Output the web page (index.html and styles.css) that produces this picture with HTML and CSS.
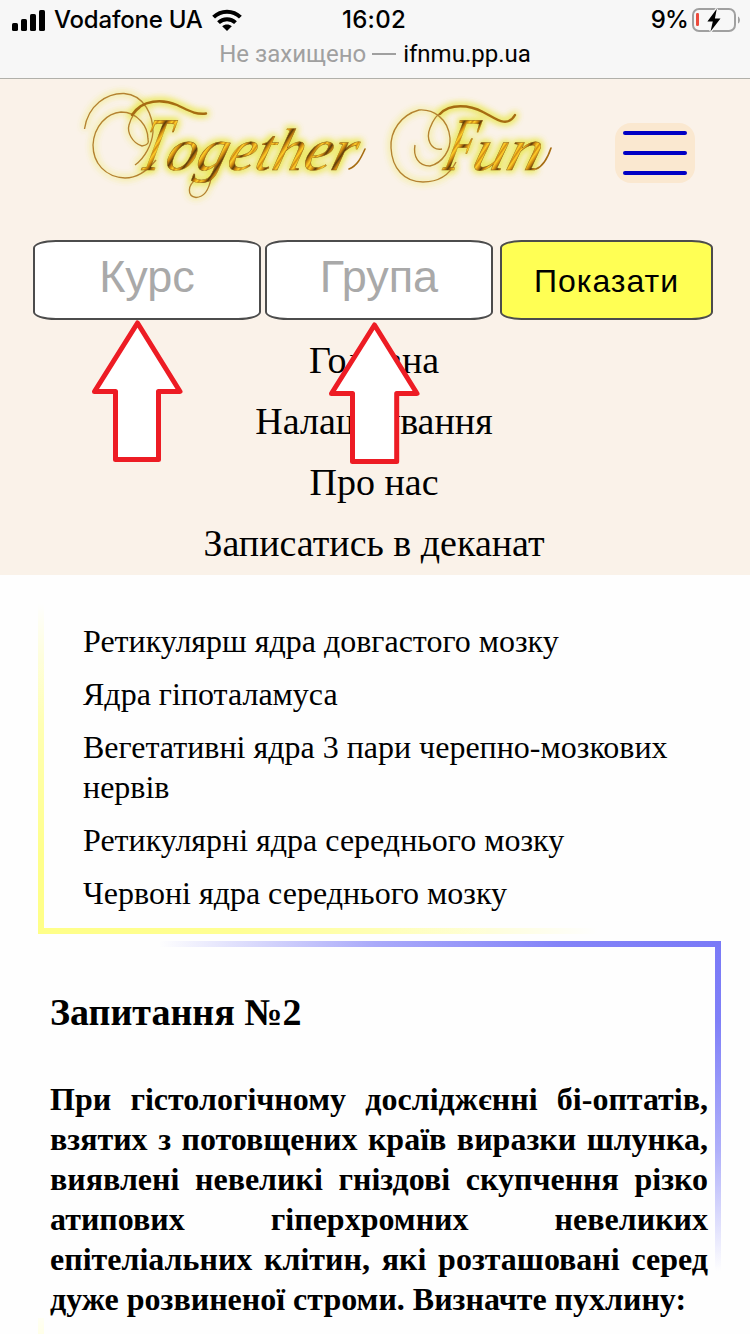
FILE: index.html
```html
<!DOCTYPE html>
<html lang="uk">
<head>
<meta charset="utf-8">
<title>Together Fun</title>
<link rel="stylesheet" href="styles.css">
</head>
<body>
<div class="browser-bar">
  <div class="status">
    <div class="carrier">
      <svg width="34" height="22" viewBox="0 0 34 22"><rect x="0" y="14" width="6" height="8" rx="1.6"/><rect x="9" y="10" width="6" height="12" rx="1.6"/><rect x="18" y="5" width="6" height="17" rx="1.6"/><rect x="27" y="1" width="6" height="21" rx="1.6"/></svg>
      <span class="carrier-name">Vodafone UA</span>
      <svg class="wifi" width="30" height="22" viewBox="0 0 30 22" fill="none" stroke="#000" stroke-width="4"><path d="M1.600 8.100C9 .8 21 .8 28.400 8.100"/><path d="M6.500 13.600c4.800-4.500 12.200-4.500 17 0"/><path d="M15 22l-4.800-4.700c2.700-2.400 6.900-2.400 9.600 0z" fill="#000" stroke="none"/></svg>
    </div>
    <span class="clock">16:02</span>
    <div class="battery">
      <span class="percent">9%</span>
      <svg width="49" height="24" viewBox="0 0 49 24"><rect x="1" y="1" width="42" height="22" rx="6" fill="none" stroke="#a0a0a0" stroke-width="2"/><path d="M46 8.500c2.600 1 2.600 6 0 7z" fill="#a0a0a0"/><rect x="4" y="5" width="3" height="13" rx="1.2" fill="#eb4b3d"/><path d="M24.800 .8L15.400 13.600h5.400l-2.300 9.800 10-12.800h-5.600z" fill="#000" stroke="#f7f7f7" stroke-width="2.6" paint-order="stroke"/></svg>
    </div>
  </div>
  <div class="address"><span class="insecure">Не захищено <b class="dash"></b></span> <span class="host">ifnmu.pp.ua</span></div>
</div>
<header class="header">
  <div class="brand-row">
    <svg class="logo" width="490" height="130" viewBox="72 82 490 130">
      <defs>
        <linearGradient id="gold" x1="0" y1="0" x2="7" y2="3" gradientUnits="userSpaceOnUse" spreadMethod="reflect">
          <stop offset="0" stop-color="#5c3a0a"/><stop offset=".35" stop-color="#c9820f"/><stop offset=".75" stop-color="#ffcf2a"/><stop offset="1" stop-color="#d08a12"/>
        </linearGradient>
        <filter id="glow" x="-10%" y="-20%" width="120%" height="140%">
          <feMorphology in="SourceAlpha" operator="dilate" radius="1.2" result="wide"/>
          <feGaussianBlur in="wide" stdDeviation="3.800" result="soft"/>
          <feFlood flood-color="#ebe85a"/>
          <feComposite in2="soft" operator="in" result="halo"/>
          <feMerge><feMergeNode in="halo"/><feMergeNode in="halo"/></feMerge>
        </filter>
        <filter id="faint" x="-10%" y="-20%" width="120%" height="140%">
          <feGaussianBlur in="SourceAlpha" stdDeviation="3.500" result="soft"/>
          <feFlood flood-color="#ebe85a"/>
          <feComposite in2="soft" operator="in" result="halo"/>
          <feMerge><feMergeNode in="halo"/><feMergeNode in="halo"/><feMergeNode in="SourceGraphic"/></feMerge>
        </filter>
        <g id="lettering">
          <g class="wordmark" transform="translate(0 169.500) skewX(-15)">
            <text class="capital" x="137" textLength="25" lengthAdjust="spacingAndGlyphs">T</text>
            <text x="163" textLength="190" lengthAdjust="spacingAndGlyphs">ogether</text>
            <text class="capital" x="442" textLength="27" lengthAdjust="spacingAndGlyphs">F</text>
            <text x="470" textLength="68" lengthAdjust="spacingAndGlyphs">un</text>
          </g>
          <g class="swash">
            <path d="M132 115C142 99 163 99 177 105C188 110 195 115 206 113.500"/>
            <path d="M440 114C450 103 470 105 483 112C495 118 507 129 515 115"/>
          </g>
        </g>
      </defs>
      <use href="#lettering" filter="url(#glow)"/>
      <g class="flourish" filter="url(#faint)">
        <path d="M84.500 129C88 105 107 93 124 93.500C145 95 153 116 153 132C152 144 145 158 135 165"/>
        <path d="M156 160C144 175 134 178 125 178C105 177 93 163 93 145C94 126 107 113 121 112C138 112 148 127 148 139C149 143 148 145 142 146C132 143 127 132 129 125C131 118 134 112 140 108"/>
        <path d="M415 145C413 156 418 166 430 166C443 163 451 149 450 138C448 118 433 109 419 110C401 115 390 131 391 148C392 168 404 182 423 182C438 182 449 176 456 162"/>
        <path d="M442 149C430 151 426 138 430 128C434 118 437 115 442 112"/>
        <path d="M211 178C209 190 204 197 196 197.500C187 196 187 185 197 179"/>
      </g>
      <use href="#lettering"/>
      <path class="tail" d="M349 169C357 166 361 158 365 149M536 169C544 166 548 157 551 148"/>
    </svg>
    <div class="burger"><i></i><i></i><i></i></div>
  </div>
  <div class="filters">
    <div class="field">Курс</div>
    <div class="field">Група</div>
    <div class="field submit">Показати</div>
  </div>
  <nav class="menu">
    <a>Головна</a>
    <a>Налаштування</a>
    <a>Про нас</a>
    <a>Записатись в деканат</a>
  </nav>
  <svg class="pointers" width="330" height="146" viewBox="91 320 330 146"><path d="M137.500 323L180 391.500H158.500V459.500H115.500V391.500H94.500Z"/><path d="M374.500 325L417 393.500H396.700V461.500H352.500V393.500H331.500Z"/></svg>
</header>
<main>
  <section class="card card-yellow">
    <p>Ретикулярш ядра довгастого мозку</p>
    <p>Ядра гіпоталамуса</p>
    <p>Вегетативні ядра 3 пари черепно-мозкових нервів</p>
    <p>Ретикулярні ядра середнього мозку</p>
    <p>Червоні ядра середнього мозку</p>
  </section>
  <section class="card-blue">
    <h2>Запитання №2</h2>
    <p class="question">При гістологічному досліджєнні бі-оптатів, взятих з потовщених країв виразки шлунка, виявлені невеликі гніздові скупчення різко атипових гіперхромних невеликих епітеліальних клітин, які розташовані серед дуже розвиненої строми. Визначте пухлину:</p>
  </section>
</main>
</body>
</html>
```
FILE: styles.css
```css
* { box-sizing: border-box; }
body { margin: 0; width: 750px; height: 1334px; overflow: hidden; background: #fefefe; color: #000; font-family: "Liberation Serif", serif; }
.browser-bar { height: 79px; background: #f7f7f7; border-bottom: 1px solid #b1b0aa; font-family: Inter, "Liberation Sans", sans-serif; }
.status { display: grid; grid-template-columns: 1fr auto 1fr; height: 40px; padding: 0 9px 0 12px; align-items: center; font-size: 24px; font-weight: 500; line-height: 40px; }
.carrier, .battery { display: flex; align-items: center; }
.carrier-name { margin-left: 8px; letter-spacing: -.2px; }
.clock { margin-right: 5px; letter-spacing: .3px; }
.wifi { margin-left: 9px; }
.battery { justify-content: flex-end; gap: 4px; }
.percent { letter-spacing: -.8px; }
.address { text-align: center; font-size: 24px; line-height: 28px; font-family: Roboto, sans-serif; }
.insecure { color: #a0a0a0; }
.dash { display: inline-block; width: 24px; height: 2px; margin: 0 1px 7px 0; background: #a0a0a0; }
.header { position: relative; height: 496px; background: #faf2e9; }
.brand-row { display: flex; height: 161px; padding: 3px 55px 0 72px; justify-content: space-between; align-items: flex-start; }
.flourish { fill: none; stroke: #b58132; stroke-width: 1.4; }
.wordmark { font: italic 60px "Liberation Serif", serif; fill: url(#gold); stroke: #8a5a16; stroke-width: .4; }
.capital { font-size: 76px; }
.swash { fill: none; stroke: #a66c12; stroke-width: 2.4; stroke-linecap: round; }
.tail { fill: none; stroke: #a66c12; stroke-width: 1.6; stroke-linecap: round; }
.burger { display: flex; flex-direction: column; justify-content: space-between; width: 80px; height: 60px; margin-top: 41px; padding: 8px; background: #fae8d0; border-radius: 16px; }
.burger i { height: 4px; border-radius: 2px; background: #0000c4; }
.filters { display: flex; padding-left: 33px; }
.field { width: 228px; height: 80px; margin-right: 4px; border: 2px solid #4c4c4c; border-radius: 10%; background: #fff; color: #a9a9a9; text-align: center; font: 45px/70px "Liberation Sans", sans-serif; }
.submit { width: 213px; margin: 0 0 0 3px; background: #ffff54; color: #000; font-size: 32px; line-height: 78px; letter-spacing: 1px; }
.menu { display: flex; flex-direction: column; align-items: center; padding: 10px 2px 0 0; }
.menu a { font-size: 38px; line-height: 61px; }
.pointers { position: absolute; left: 91px; top: 241px; fill: #fff; stroke: #ed1c24; stroke-width: 5; stroke-linejoin: round; }
.card { width: 683px; height: 354px; margin: 5px 0 0 38px; padding: 41.100px 40px 0 45px; background: linear-gradient(to top, #ffff88 0, #ffff8c 80px, #ffffb4 210px, transparent 330px) left top / 6px 100% no-repeat, linear-gradient(to right, #ffff88 0, #ffff94 200px, #ffffb4 337px, transparent 560px) left bottom / 100% 6px no-repeat; }
.card p { margin: 0 0 13.100px; font-size: 32px; line-height: 40px; }
.card-blue { width: 683px; margin: 7px 0 0 38px; height: 393px; padding: 47px 13px 0 12px; background: linear-gradient(to bottom, #7a7af7 0, #8080f8 80px, #b0b0fa 210px, transparent 330px) right top / 6px 100% no-repeat, linear-gradient(to left, #7a7af7 0, #8383f8 160px, #aaaafa 346px, transparent 562px) right top / 100% 6px no-repeat, linear-gradient(#fffff4, #ffffe8) 0 377px / 6px 16px no-repeat; }
.card-blue h2 { margin: 0; font-size: 38px; line-height: 48px; }
.question { margin: 43px 0 0; font-size: 32px; line-height: 40px; font-weight: bold; text-align: justify; }
```
